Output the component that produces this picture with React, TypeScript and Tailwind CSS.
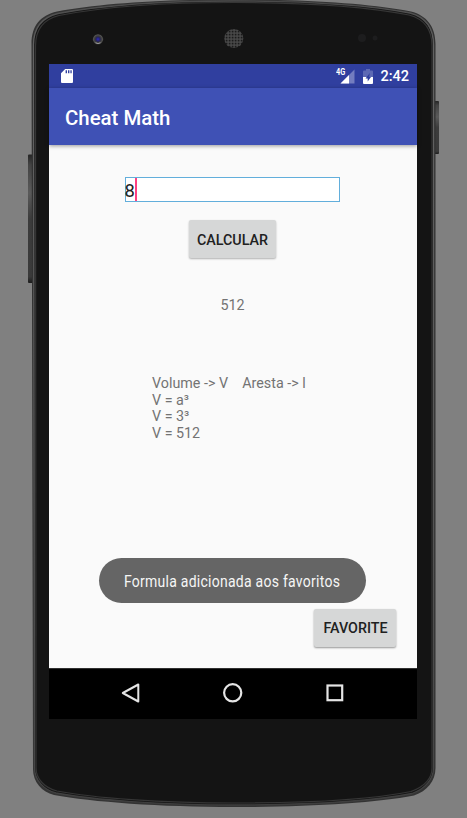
function DeviceFrame() {
  return (
    <svg className="absolute inset-0" width="467" height="818" viewBox="0 0 467 818" fill="none">
      <defs>
        <linearGradient id="key" x1="0" y1="0" x2="0" y2="1">
          <stop offset="0" stopColor="#252525" />
          <stop offset="0.08" stopColor="#444444" />
          <stop offset="0.3" stopColor="#5a5a5a" />
          <stop offset="0.5" stopColor="#3c3c3c" />
          <stop offset="0.95" stopColor="#3a3a3a" />
          <stop offset="1" stopColor="#1c1c1c" />
        </linearGradient>
        <linearGradient id="rim" x1="0" y1="0" x2="0" y2="1">
          <stop offset="0" stopColor="#4a4a4a" />
          <stop offset="0.06" stopColor="#636363" />
          <stop offset="0.6" stopColor="#575757" />
          <stop offset="0.95" stopColor="#464646" />
          <stop offset="1" stopColor="#3e3e3e" />
        </linearGradient>
        <radialGradient id="lens">
          <stop offset="0" stopColor="#2c28c0" />
          <stop offset="0.4" stopColor="#25235c" />
          <stop offset="0.6" stopColor="#3a3a3c" />
          <stop offset="0.85" stopColor="#505050" />
          <stop offset="1" stopColor="#2a2a2a" />
        </radialGradient>
        <pattern id="mesh" width="3" height="3" patternUnits="userSpaceOnUse">
          <rect width="3" height="3" fill="#4c4c4c" />
          <rect x="0.7" y="0.7" width="1.8" height="1.8" fill="#1b1b1b" />
        </pattern>
      </defs>
      <rect x="28" y="154.500" width="5" height="128.500" rx="1" fill="url(#key)" />
      <rect x="434" y="101" width="5" height="53" rx="1" fill="url(#key)" />
      <path
        d="M31.500 44C31.500 26 40 15.500 57 11.500C100 3.500 160 -0.500 234 -0.500C308 -0.500 370 3.500 411 11.500C427 15.500 435.500 27 435.500 44V768C435.500 781 427 791 414 795.500C375 803 308 807 234 807C160 807 92 802 54 795C42 792 33 782 33 769Z"
        fill="#333333"
      />
      <path
        d="M33.500 45C33.500 28 41.500 17.500 58 13.500C100 5.500 160 1 234 1C308 1 370 5.500 410 13C425 17 433.500 28 433.500 45V768C433.500 779 425 789 412 793.500C374 801 308 805 234 805C160 805 94 800 56 793C44 790 34.500 780 34.500 768Z"
        fill="#141414"
        stroke="url(#rim)"
        strokeWidth="1.3"
      />
      <path
        d="M35.500 46C35.500 30 43 19.500 59 15.500C100 7.500 160 2.500 234 2.500C308 2.500 370 7.500 409 15C424 19 432 30 432 46V768C432 779 423 787 411 791.500C374 799 308 803 234 803C160 803 94 798 57 791C45 788 36 779 36 768Z"
        fill="#141414"
        stroke="#363636"
        strokeWidth="1.2"
      />
      <circle cx="98" cy="39.300" r="5.300" fill="url(#lens)" />
      <path d="M95.500 42.700Q98 44.500 100.500 42.700" stroke="#999" strokeWidth="1" />
      <circle cx="233.800" cy="38.500" r="9.500" fill="url(#mesh)" />
      <circle cx="362" cy="38" r="4" fill="#1d1d1e" />
      <circle cx="375" cy="38" r="2.500" fill="#1d1d1e" />
    </svg>
  );
}

function StatusBar() {
  return (
    <div className="flex h-6 shrink-0 items-center bg-[#303f9f] pr-2 pl-3">
      <svg width="12" height="14" viewBox="0 0 12 14">
        <path
          fill="#fff"
          fillRule="evenodd"
          d="M4.200 0H11Q12 0 12 1V13Q12 14 11 14H1Q0 14 0 13V4.200ZM4.600 1.200V4.200H6V1.200ZM7 1.200V4.200H8.400V1.200ZM9.400 1.200V4.200H10.700V1.200Z"
        />
      </svg>
      <div className="ml-auto flex items-center">
        <div className="relative h-[15px] w-[19px]">
          <svg width="19" height="15" viewBox="0 0 19 15">
            <path d="M18.500 0.500V14.500H4.500Z" fill="#737dbf" />
            <path d="M13 6V14.500H4.500Z" fill="#fff" />
          </svg>
          <span className="absolute -top-px left-0 origin-left scale-x-[0.86] text-[8.500px] leading-[9px] font-bold">
            4G
          </span>
        </div>
        <svg className="ml-2" width="10" height="15" viewBox="0 0 10 15">
          <path d="M3 0H7V1.500H9Q10 1.500 10 2.500V8H0V2.500Q0 1.500 1 1.500H3Z" fill="#5d69b4" />
          <path d="M0 8H10V14Q10 15 9 15H1Q0 15 0 14Z" fill="#fff" />
          <path d="M6.800 4L2.500 9.500H4.700V12.500L8 8H6.200Z" fill="#303f9f" />
        </svg>
        <span className="ml-[7px] pt-0.5 text-[14.500px] leading-none font-medium">2:42</span>
      </div>
    </div>
  );
}

function NavigationBar() {
  return (
    <nav className="flex h-[51px] shrink-0 justify-center border-t border-[#303030] bg-black pt-3">
      <svg width="224" height="24" viewBox="0 0 224 24" fill="none" stroke="#e5e5e5" strokeWidth="2">
        <path d="M17.300 3.500V20.500L1.800 12Z" strokeLinejoin="round" />
        <circle cx="111.700" cy="11.800" r="8.600" strokeWidth="2.200" />
        <rect x="206.500" y="4.500" width="14.700" height="14.700" strokeWidth="2.200" />
      </svg>
    </nav>
  );
}

export default function App() {
  return (
    <div className="relative h-[818px] w-[467px] overflow-hidden bg-[#808080] pt-16 pl-[49px] font-['Roboto',sans-serif]">
      <DeviceFrame />
      <main className="relative flex h-[655px] w-[368px] flex-col bg-[#fafafa] text-white">
        <StatusBar />
        <header className="z-10 flex h-[57px] shrink-0 items-center bg-[#3f51b5] pt-[3px] pl-4 shadow-[0_1px_4px_rgba(0,0,0,0.4)]">
          <h1 className="text-[20.400px] leading-6 font-medium">Cheat Math</h1>
        </header>
        <section className="flex grow flex-col items-center pt-8 pr-[2px] text-[14.300px] leading-[17px] text-[#737373]">
          <div className="flex h-[25px] w-[215px] shrink-0 items-center border border-[#62aedb] bg-white text-[18.400px] text-[#212121]">
            <span className="-ml-px pt-0.5">8</span>
            <span className="h-[23px] w-[2px] shrink-0 bg-[#ff4081]" />
          </div>
          <button className="mt-[18px] h-[38px] w-[87px] rounded-[2px] bg-[#d6d7d7] pt-0.5 pl-px text-[14.300px] font-medium text-[#212121] shadow-[0_1px_2px_rgba(0,0,0,0.3)]">
            CALCULAR
          </button>
          <p className="mt-[39px] pl-px">512</p>
          <div className="mt-[61px] ml-[103px] w-[160px] self-start leading-[16.700px] whitespace-pre">
            <p>Volume -&gt; V{"    "}Aresta -&gt; l</p>
            <p>V = a³</p>
            <p>V = 3³</p>
            <p>V = 512</p>
          </div>
          <div className="mt-[116px] flex h-[45px] w-[267px] shrink-0 items-center justify-center rounded-full bg-[#656565] pt-0.5 text-[#f5f5f5]">
            <span className="scale-x-[0.865] text-[16.200px] tracking-[0.300px] whitespace-nowrap">
              Formula adicionada aos favoritos
            </span>
          </div>
          <button className="mt-1.5 mr-[19px] h-[38px] w-[82px] shrink-0 self-end rounded-[2px] bg-[#d6d7d7] pt-0.5 pl-px text-[14.300px] font-medium text-[#212121] shadow-[0_1px_2px_rgba(0,0,0,0.4)]">
            FAVORITE
          </button>
        </section>
        <NavigationBar />
      </main>
    </div>
  );
}
